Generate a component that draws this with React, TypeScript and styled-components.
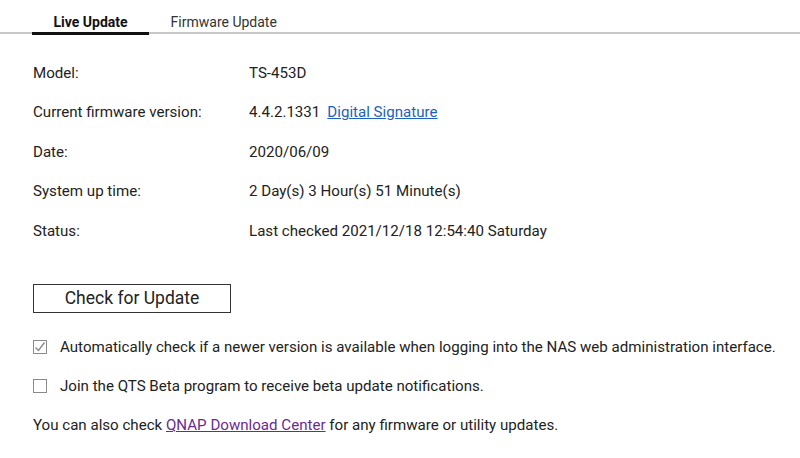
import React from "react";
import styled, { createGlobalStyle } from "styled-components";

const Global = createGlobalStyle`
  html, body { margin: 0; padding: 0; background: #fff; }
  body { font-family: Roboto, "Liberation Sans", sans-serif; color: #222; }
`;

const Page = styled.div`
  width: 800px;
  height: 458px;
  overflow: hidden;
  background: #fff;
`;

const TabBar = styled.div`
  display: flex;
  height: 32px;
  padding-left: 32px;
  border-bottom: 2px solid #c8c8c8;
  box-sizing: content-box;
`;

const Tab = styled.div<{ $active?: boolean }>`
  padding: 12px 21.5px 0;
  display: flex;
  align-items: center;
  justify-content: center;
  box-sizing: border-box;
  font-size: 14px;
  font-weight: ${(p) => (p.$active ? 700 : 400)};
  color: ${(p) => (p.$active ? "#111" : "#333")};
  border-bottom: 3px solid ${(p) => (p.$active ? "#111" : "transparent")};
  margin-bottom: -2px;
  height: 35px;
`;

const Content = styled.div`
  padding: 19px 0 0 33px;
  font-size: 15.1px;
`;

const InfoGrid = styled.div`
  display: grid;
  grid-template-columns: 216px 1fr;
  grid-auto-rows: 39.5px;
  align-items: center;
`;

const Label = styled.div`
  color: #222;
`;

const Value = styled.div`
  color: #222;
  display: flex;
  gap: 7px;
`;

const Link = styled.a<{ $visited?: boolean }>`
  color: ${(p) => (p.$visited ? "#6a2a96" : "#1a63c0")};
  text-decoration: underline;
  cursor: pointer;
`;

const Button = styled.button`
  margin-top: 33px;
  width: 198px;
  height: 29px;
  border: 1px solid #333;
  background: #fff;
  font-family: Roboto, "Liberation Sans", sans-serif;
  font-size: 17.5px;
  color: #222;
  padding: 0;
  display: block;
`;

const Options = styled.div`
  margin-top: 15px;
  display: flex;
  flex-direction: column;
`;

const OptionRow = styled.label`
  display: flex;
  align-items: center;
  gap: 13px;
  height: 39px;
`;

const Box = styled.span`
  width: 14px;
  height: 14px;
  border: 1px solid #8a8a8a;
  box-sizing: border-box;
  display: flex;
  align-items: center;
  justify-content: center;
  background: #fff;
  flex-shrink: 0;
`;

const Note = styled.div`
  height: 39px;
  display: flex;
  align-items: center;
  white-space: pre;
`;

function Checkbox({ checked }: { checked?: boolean }) {
  return (
    <Box>
      {checked && (
        <svg width="12" height="12" viewBox="0 0 12 12">
          <path d="M1.5 6.5 L4.5 9.5 L10.5 1.5" fill="none" stroke="#8a8a8a" strokeWidth="1.4" />
        </svg>
      )}
    </Box>
  );
}

const rows: [string, React.ReactNode][] = [
  ["Model:", "TS-453D"],
  [
    "Current firmware version:",
    <>
      <span>4.4.2.1331</span>
      <Link>Digital Signature</Link>
    </>,
  ],
  ["Date:", "2020/06/09"],
  ["System up time:", "2 Day(s) 3 Hour(s) 51 Minute(s)"],
  ["Status:", "Last checked 2021/12/18 12:54:40 Saturday"],
];

export default function App() {
  return (
    <Page>
      <Global />
      <TabBar>
        <Tab $active>Live Update</Tab>
        <Tab>Firmware Update</Tab>
      </TabBar>
      <Content>
        <InfoGrid>
          {rows.map(([l, v]) => (
            <React.Fragment key={l}>
              <Label>{l}</Label>
              <Value>{v}</Value>
            </React.Fragment>
          ))}
        </InfoGrid>
        <Button>Check for Update</Button>
        <Options>
          <OptionRow>
            <Checkbox checked />
            <span>Automatically check if a newer version is available when logging into the NAS web administration interface.</span>
          </OptionRow>
          <OptionRow>
            <Checkbox />
            <span>Join the QTS Beta program to receive beta update notifications.</span>
          </OptionRow>
          <Note>
            You can also check <Link $visited>QNAP Download Center</Link> for any firmware or utility updates.
          </Note>
        </Options>
      </Content>
    </Page>
  );
}
